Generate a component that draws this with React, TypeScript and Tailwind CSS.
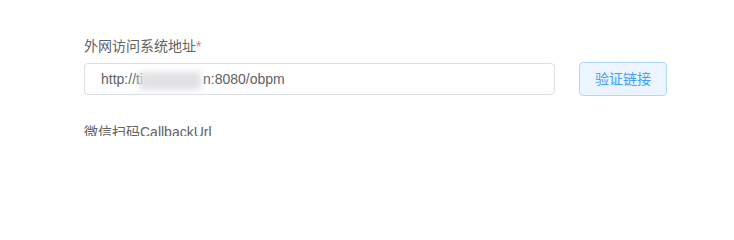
import React from "react";

export default function App() {
  const font = { fontFamily: '"Liberation Sans", "Noto Sans CJK SC", sans-serif' };
  return (
    <div className="w-[734px] h-[240px] bg-white" style={font}>
      <div className="h-[136px] overflow-hidden pl-[84px] pt-[36px]">
        <div className="text-[14px] leading-[20px] text-[#606266]">
          外网访问系统地址<span className="text-[#f56c6c]">*</span>
        </div>
        <div className="mt-[6px] flex items-center gap-[24px]">
          <div className="w-[471px] h-[32px] rounded-[4px] border border-[#dcdfe6] flex items-center pl-[16px] text-[14px] text-[#606266]">
            <span>http://ti</span>
            <span className="relative inline-block w-[60px] h-[16px]">
              <span className="absolute left-[-4px] top-[1px] w-[62px] h-[18px] bg-[#e2e2e6] blur-[3px]" />
            </span>
            <span>n:8080/obpm</span>
          </div>
          <button className="w-[88px] h-[34px] rounded-[4px] border border-[#b3d8ff] bg-[#ecf5ff] text-[#409eff] text-[14px] leading-none">
            验证链接
          </button>
        </div>
        <div className="mt-[26px] text-[14px] leading-[20px] text-[#606266]">微信扫码CallbackUrl</div>
      </div>
    </div>
  );
}
